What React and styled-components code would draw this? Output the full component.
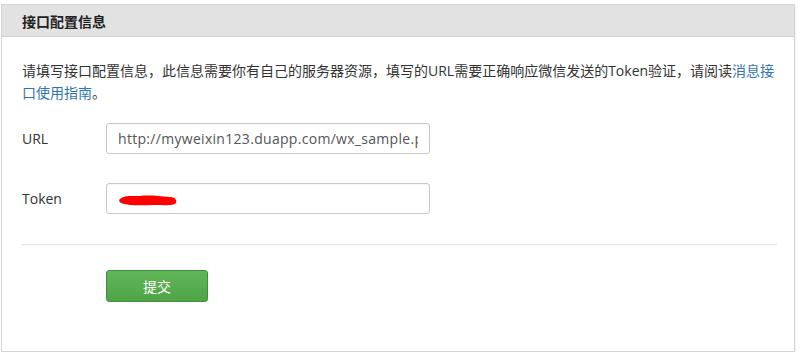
import styled, { createGlobalStyle } from "styled-components";

const GlobalStyle = createGlobalStyle`
  body {
    margin: 0;
    background: #fff;
    font-family: "Segoe UI", "Open Sans", "Noto Sans CJK SC", sans-serif;
    color: #333;
  }
`;

const Panel = styled.section`
  margin: 4px 7px 0 1px;
  height: 348px;
  box-sizing: border-box;
  border: 1px solid #d4d4d4;
  background: #fff;
  box-shadow: 1px 1px 2px rgba(0, 0, 0, 0.06);
`;

const PanelHeader = styled.header`
  height: 32px;
  box-sizing: border-box;
  padding: 0 20px;
  display: flex;
  align-items: center;
  background: #e2e2e2;
  border-bottom: 1px solid #cfcfcf;

  h2 {
    margin: 0;
    font-size: 14px;
    font-weight: 700;
    color: #222;
  }
`;

const PanelBody = styled.div`
  padding: 23px 18px 0 20px;
`;

const Intro = styled.p`
  margin: 0 0 19px;
  font-size: 14px;
  line-height: 22px;
  color: #333;

  a {
    color: #2f74b5;
    text-decoration: none;
  }
`;

const FormRow = styled.div`
  display: flex;
  align-items: center;
  margin-bottom: ${({ $gap }) => $gap}px;
`;

const Label = styled.label`
  width: 84px;
  font-size: 14px;
  color: #333;
`;

const InputBox = styled.div`
  position: relative;
  width: 324px;
  height: 31px;
  box-sizing: border-box;
  border: 1px solid #c8c8c8;
  border-radius: 3px;
  background: #fff;
  box-shadow: inset 0 1px 1px rgba(0, 0, 0, 0.04);
  display: flex;
  align-items: center;
  padding: 0 11px;
`;

const InputText = styled.span`
  flex: 1;
  overflow: hidden;
  white-space: nowrap;
  font-size: 14px;
  letter-spacing: 0.3px;
  color: #555;
`;

const Redacted = styled.svg`
  position: absolute;
  left: 11px;
  top: 9px;
`;

const Divider = styled.hr`
  margin: 0 0 25px;
  border: 0;
  height: 1px;
  width: 755px;
  background: #e6e6e6;
  box-shadow: 0 1px 1px rgba(0, 0, 0, 0.03);
`;

const Actions = styled.div`
  padding-left: 84px;
`;

const SubmitButton = styled.button`
  width: 102px;
  height: 32px;
  border: 1px solid #3f8f3a;
  border-radius: 3px;
  background: linear-gradient(#62b65a, #4ea446);
  color: #fff;
  font-size: 14px;
  font-family: "Noto Sans CJK SC", sans-serif;
  cursor: pointer;
`;

export default function App() {
  return (
    <>
      <GlobalStyle />
      <Panel>
        <PanelHeader>
          <h2>接口配置信息</h2>
        </PanelHeader>
        <PanelBody>
          <Intro>
            请填写接口配置信息，此信息需要你有自己的服务器资源，填写的URL需要正确响应微信发送的Token验证，请阅读
            <a href="#">消息接口使用指南</a>。
          </Intro>
          <FormRow $gap={29}>
            <Label>URL</Label>
            <InputBox>
              <InputText>http://myweixin123.duapp.com/wx_sample.php</InputText>
            </InputBox>
          </FormRow>
          <FormRow $gap={30}>
            <Label>Token</Label>
            <InputBox>
              <Redacted width="60" height="14" viewBox="0 0 60 14">
                <path
                  d="M2 6 C6 2, 14 3, 22 3 C30 2, 40 3, 52 4 C57 4, 59 7, 58 10 C56 13, 46 12, 36 12 C26 12, 14 13, 6 11 C2 10, 0 8, 2 6 Z"
                  fill="#f00"
                />
              </Redacted>
            </InputBox>
          </FormRow>
          <Divider />
          <Actions>
            <SubmitButton>提交</SubmitButton>
          </Actions>
        </PanelBody>
      </Panel>
    </>
  );
}
